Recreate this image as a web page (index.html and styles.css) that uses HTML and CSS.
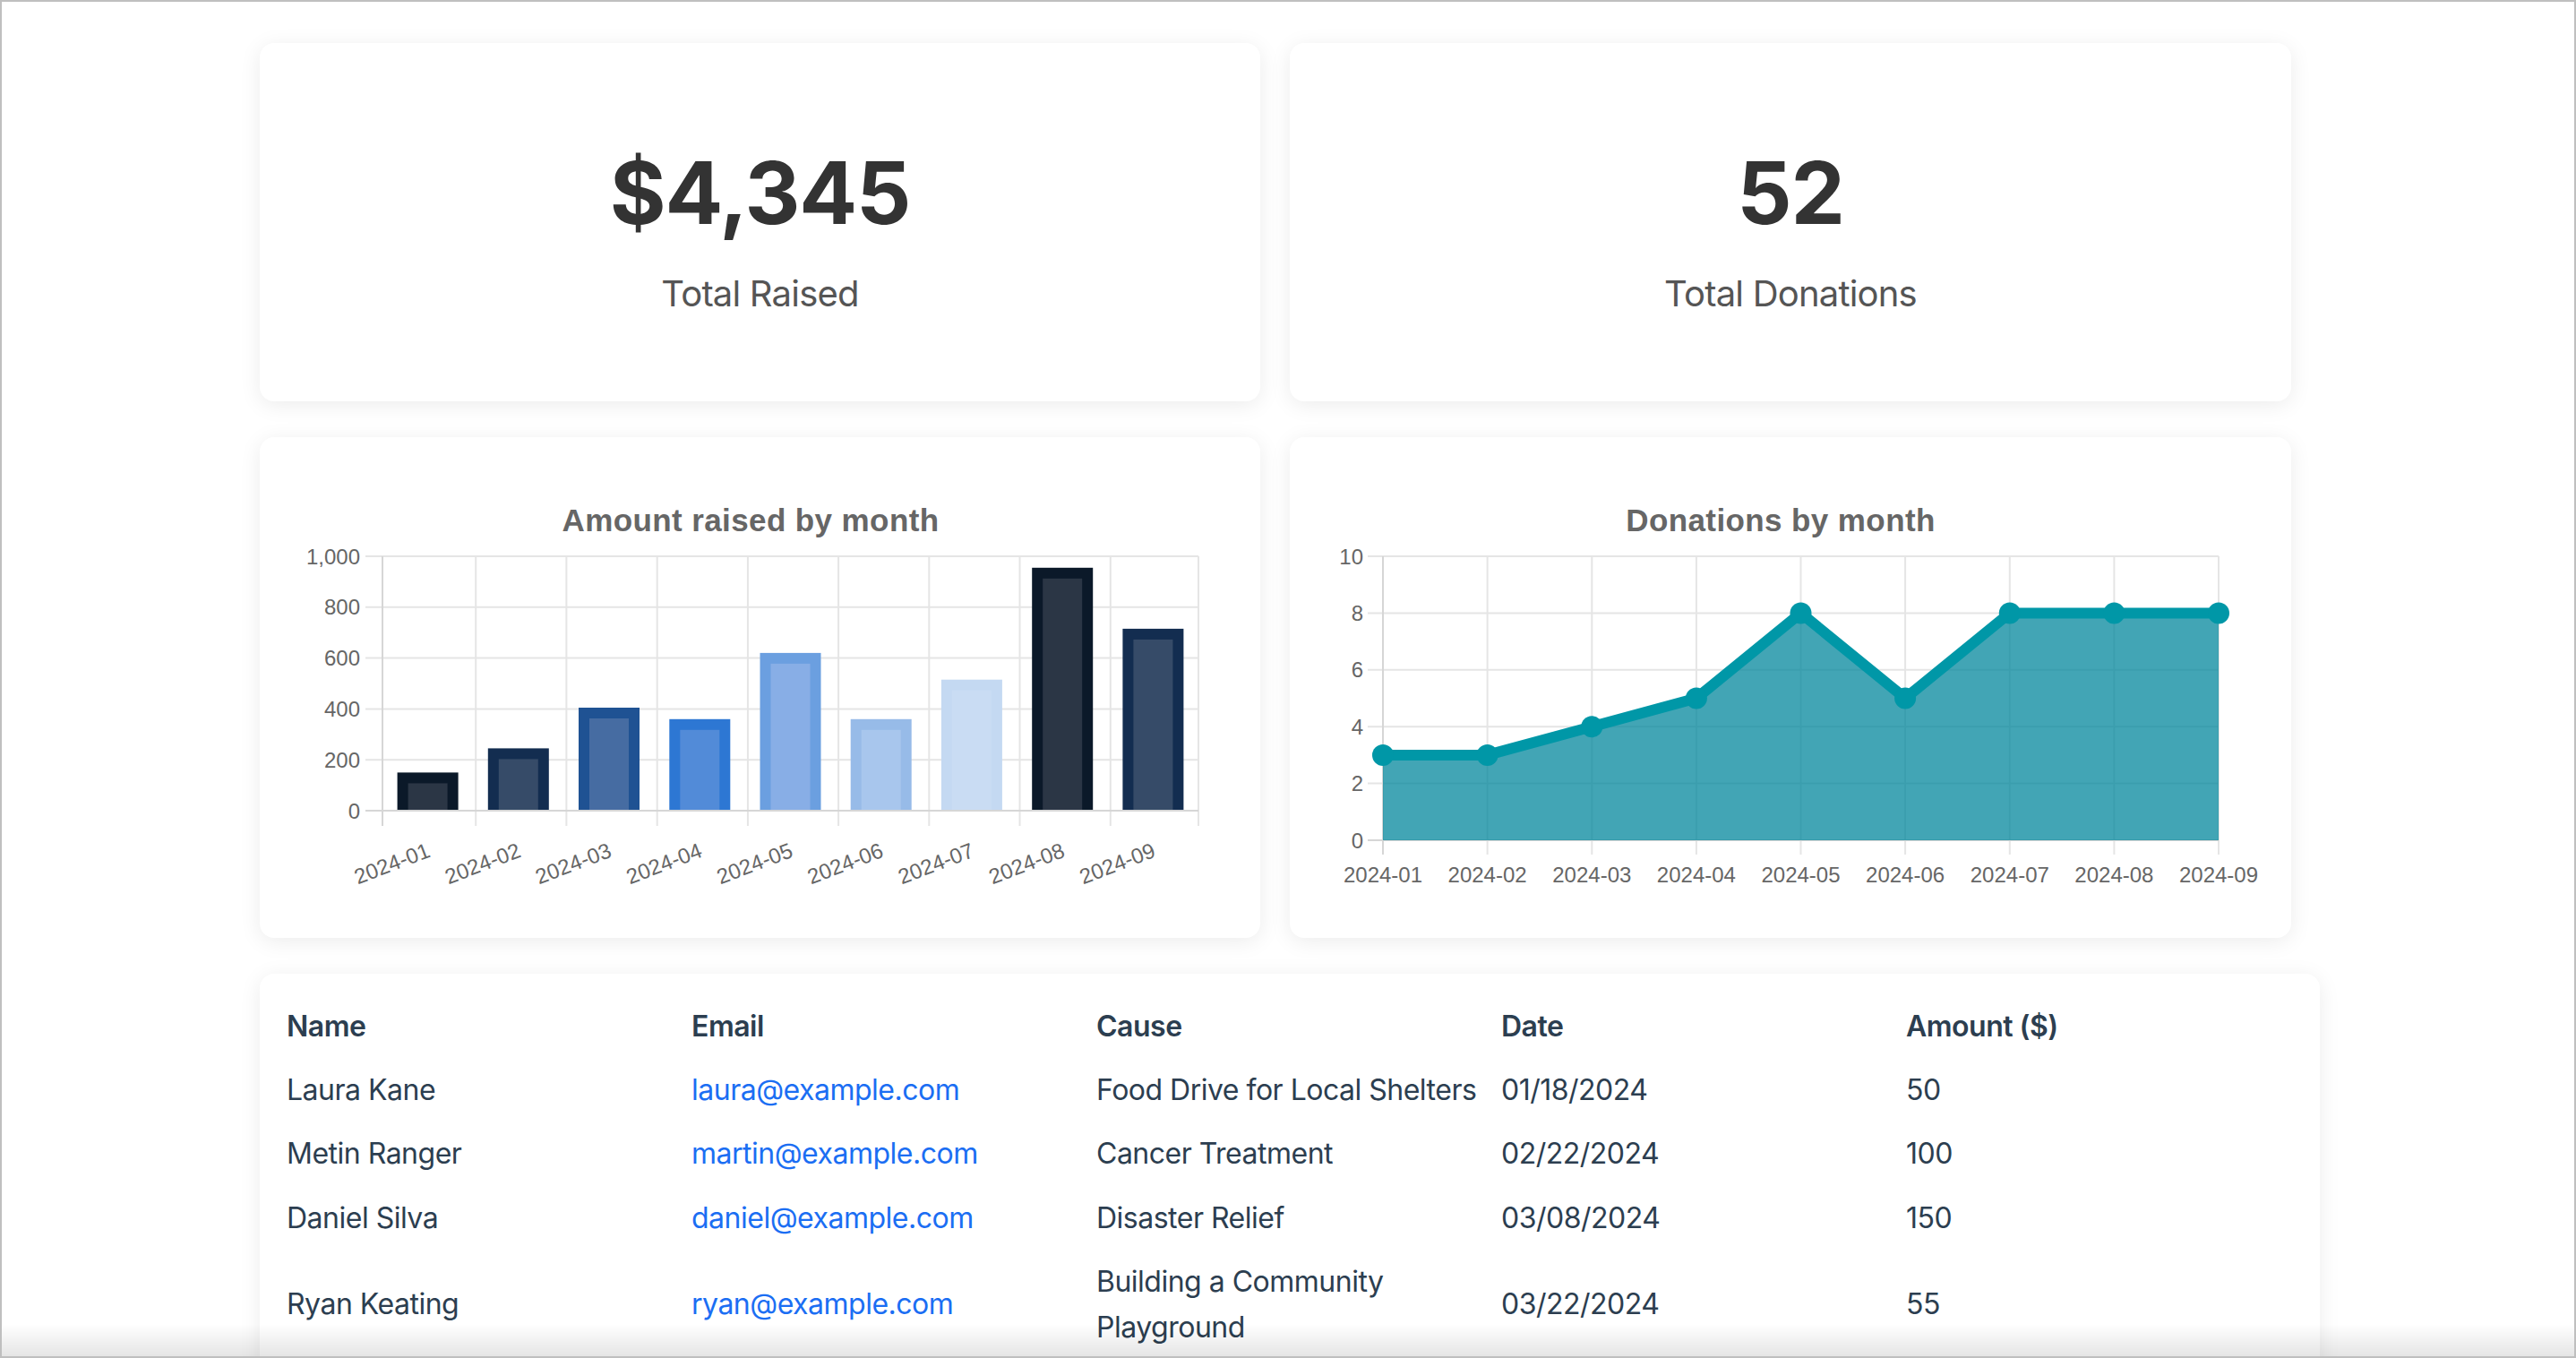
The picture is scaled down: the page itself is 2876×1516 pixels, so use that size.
FILE: index.html
```html
<!DOCTYPE html>
<html lang="en">
<head>
<meta charset="utf-8">
<title>Donations Dashboard</title>
<link rel="stylesheet" href="styles.css">
</head>
<body>
<main class="container">
  <section class="grid">
    <div class="card stat">
      <div class="stat-value">$4,345</div>
      <div class="stat-label">Total Raised</div>
    </div>
    <div class="card stat">
      <div class="stat-value">52</div>
      <div class="stat-label">Total Donations</div>
    </div>

    <div class="card chart">
      <svg class="chart-svg" viewBox="0 0 1117 559" width="1117" height="559">
        <text class="chart-title" x="548" y="105">Amount raised by month</text>
        <g class="gridlines">
          <line x1="118" y1="133" x2="1048" y2="133"/>
          <line x1="118" y1="189.8" x2="1048" y2="189.8"/>
          <line x1="118" y1="246.6" x2="1048" y2="246.6"/>
          <line x1="118" y1="303.4" x2="1048" y2="303.4"/>
          <line x1="118" y1="360.2" x2="1048" y2="360.2"/>
          <line x1="241.2" y1="133" x2="241.2" y2="434"/>
          <line x1="342.4" y1="133" x2="342.4" y2="434"/>
          <line x1="443.7" y1="133" x2="443.7" y2="434"/>
          <line x1="544.9" y1="133" x2="544.9" y2="434"/>
          <line x1="646.1" y1="133" x2="646.1" y2="434"/>
          <line x1="747.3" y1="133" x2="747.3" y2="434"/>
          <line x1="848.5" y1="133" x2="848.5" y2="434"/>
          <line x1="949.8" y1="133" x2="949.8" y2="434"/>
          <line x1="1048" y1="133" x2="1048" y2="434"/>
        </g>
        <g class="bars">
          <rect x="153.6" y="374.4" width="68" height="42.6" fill="#0b1929"/>
          <rect x="165.6" y="386.4" width="44" height="30.6" fill="#2b3645"/>
          <rect x="254.8" y="347.4" width="68" height="69.6" fill="#132d50"/>
          <rect x="266.8" y="359.4" width="44" height="57.6" fill="#364b68"/>
          <rect x="356" y="302" width="68" height="115" fill="#1f5293"/>
          <rect x="368" y="314" width="44" height="103" fill="#466ca2"/>
          <rect x="457.3" y="314.8" width="68" height="102.2" fill="#2d77d3"/>
          <rect x="469.3" y="326.8" width="44" height="90.2" fill="#528bd8"/>
          <rect x="558.5" y="240.9" width="68" height="176.1" fill="#6b9fe0"/>
          <rect x="570.5" y="252.9" width="44" height="164.1" fill="#88aee6"/>
          <rect x="659.7" y="314.8" width="68" height="102.2" fill="#97bbe8"/>
          <rect x="671.7" y="326.8" width="44" height="90.2" fill="#a8c6ed"/>
          <rect x="760.9" y="270.7" width="68" height="146.3" fill="#c4d9f2"/>
          <rect x="772.9" y="282.7" width="44" height="134.3" fill="#c9dcf3"/>
          <rect x="862.2" y="145.8" width="68" height="271.2" fill="#0b1929"/>
          <rect x="874.2" y="157.8" width="44" height="259.2" fill="#2b3645"/>
          <rect x="963.4" y="213.9" width="68" height="203.1" fill="#132d50"/>
          <rect x="975.4" y="225.9" width="44" height="191.1" fill="#364b68"/>
        </g>
        <g class="axes">
          <line x1="118" y1="417" x2="1048" y2="417"/>
          <line x1="137" y1="133" x2="137" y2="434"/>
        </g>
        <g class="ticks ticks-y">
          <text x="112" y="141.5">1,000</text>
          <text x="112" y="198.3">800</text>
          <text x="112" y="255.1">600</text>
          <text x="112" y="311.9">400</text>
          <text x="112" y="368.7">200</text>
          <text x="112" y="425.5">0</text>
        </g>
        <g class="ticks ticks-x-rot">
          <text transform="translate(185.6 452) rotate(-21)" y="17">2024-01</text>
          <text transform="translate(286.8 452) rotate(-21)" y="17">2024-02</text>
          <text transform="translate(388 452) rotate(-21)" y="17">2024-03</text>
          <text transform="translate(489.3 452) rotate(-21)" y="17">2024-04</text>
          <text transform="translate(590.5 452) rotate(-21)" y="17">2024-05</text>
          <text transform="translate(691.7 452) rotate(-21)" y="17">2024-06</text>
          <text transform="translate(792.9 452) rotate(-21)" y="17">2024-07</text>
          <text transform="translate(894.2 452) rotate(-21)" y="17">2024-08</text>
          <text transform="translate(995.4 452) rotate(-21)" y="17">2024-09</text>
        </g>
      </svg>
    </div>

    <div class="card chart">
      <svg class="chart-svg" viewBox="0 0 1118 559" width="1118" height="559">
        <text class="chart-title" x="548" y="105">Donations by month</text>
        <g class="gridlines">
          <line x1="87" y1="133" x2="1037" y2="133"/>
          <line x1="87" y1="196.4" x2="1037" y2="196.4"/>
          <line x1="87" y1="259.8" x2="1037" y2="259.8"/>
          <line x1="87" y1="323.2" x2="1037" y2="323.2"/>
          <line x1="87" y1="386.6" x2="1037" y2="386.6"/>
          <line x1="220.6" y1="133" x2="220.6" y2="466"/>
          <line x1="337.3" y1="133" x2="337.3" y2="466"/>
          <line x1="453.9" y1="133" x2="453.9" y2="466"/>
          <line x1="570.5" y1="133" x2="570.5" y2="466"/>
          <line x1="687.1" y1="133" x2="687.1" y2="466"/>
          <line x1="803.8" y1="133" x2="803.8" y2="466"/>
          <line x1="920.4" y1="133" x2="920.4" y2="466"/>
          <line x1="1037" y1="133" x2="1037" y2="466"/>
        </g>
        <g class="axes">
          <line x1="87" y1="450" x2="1037" y2="450"/>
          <line x1="104" y1="133" x2="104" y2="466"/>
        </g>
        <path class="area" d="M104,450 L104,354.9 L220.6,354.9 L337.3,323.2 L453.9,291.5 L570.5,196.4 L687.1,291.5 L803.8,196.4 L920.4,196.4 L1037,196.4 L1037,450 Z"/>
        <polyline class="line" points="104,354.9 220.6,354.9 337.3,323.2 453.9,291.5 570.5,196.4 687.1,291.5 803.8,196.4 920.4,196.4 1037,196.4"/>
        <g class="points">
          <circle cx="104" cy="354.9" r="12"/>
          <circle cx="220.6" cy="354.9" r="12"/>
          <circle cx="337.3" cy="323.2" r="12"/>
          <circle cx="453.9" cy="291.5" r="12"/>
          <circle cx="570.5" cy="196.4" r="12"/>
          <circle cx="687.1" cy="291.5" r="12"/>
          <circle cx="803.8" cy="196.4" r="12"/>
          <circle cx="920.4" cy="196.4" r="12"/>
          <circle cx="1037" cy="196.4" r="12"/>
        </g>
        <g class="ticks ticks-y">
          <text x="82" y="141.5">10</text>
          <text x="82" y="204.9">8</text>
          <text x="82" y="268.3">6</text>
          <text x="82" y="331.7">4</text>
          <text x="82" y="395.1">2</text>
          <text x="82" y="458.5">0</text>
        </g>
        <g class="ticks ticks-x">
          <text x="104" y="497">2024-01</text>
          <text x="220.6" y="497">2024-02</text>
          <text x="337.3" y="497">2024-03</text>
          <text x="453.9" y="497">2024-04</text>
          <text x="570.5" y="497">2024-05</text>
          <text x="687.1" y="497">2024-06</text>
          <text x="803.8" y="497">2024-07</text>
          <text x="920.4" y="497">2024-08</text>
          <text x="1037" y="497">2024-09</text>
        </g>
      </svg>
    </div>
  </section>

  <section class="card table-card">
    <table class="donations">
      <thead>
        <tr><th>Name</th><th>Email</th><th>Cause</th><th>Date</th><th>Amount ($)</th></tr>
      </thead>
      <tbody>
        <tr><td>Laura Kane</td><td><a href="#">laura@example.com</a></td><td>Food Drive for Local Shelters</td><td>01/18/2024</td><td>50</td></tr>
        <tr><td>Metin Ranger</td><td><a href="#">martin@example.com</a></td><td>Cancer Treatment</td><td>02/22/2024</td><td>100</td></tr>
        <tr><td>Daniel Silva</td><td><a href="#">daniel@example.com</a></td><td>Disaster Relief</td><td>03/08/2024</td><td>150</td></tr>
        <tr><td>Ryan Keating</td><td><a href="#">ryan@example.com</a></td><td>Building a Community Playground</td><td>03/22/2024</td><td>55</td></tr>
      </tbody>
    </table>
  </section>
</main>
<div class="bottom-fade"></div>
</body>
</html>
```

FILE: styles.css
```css
html, body {
  margin: 0;
  padding: 0;
}

body {
  box-sizing: border-box;
  height: 100vh;
  overflow: hidden;
  background: #ffffff;
  border: 2px solid #bfbfbf;
  font-family: Inter, "Noto Sans", "Liberation Sans", sans-serif;
  color: #333333;
}

.container {
  width: 2300px;
  margin-left: calc(50% - 1148px);
  padding-top: 46px;
}

.grid {
  display: grid;
  grid-template-columns: 1117px 1118px;
  column-gap: 33px;
  row-gap: 40px;
}

.card {
  background: #ffffff;
  border-radius: 16px;
  box-shadow: 0 4px 24px rgba(0, 0, 0, 0.08);
}

.stat {
  box-sizing: border-box;
  height: 400px;
  padding-top: 119px;
  text-align: center;
}

.stat-value {
  font-size: 96px;
  line-height: 1;
  font-weight: 700;
  color: #333333;
  letter-spacing: -1.2px;
}

.stat-label {
  margin-top: 45px;
  font-size: 40px;
  line-height: 1;
  color: #555555;
  letter-spacing: -0.8px;
}

.chart {
  height: 559px;
}

.chart-svg {
  display: block;
}

.chart-title {
  font-family: "Liberation Sans", Arial, sans-serif;
  font-size: 35px;
  font-weight: 700;
  letter-spacing: 0.4px;
  fill: #666666;
  text-anchor: middle;
}

.gridlines line {
  stroke: #e5e5e5;
  stroke-width: 2;
}

.axes line {
  stroke: #d6d6d6;
  stroke-width: 2;
}

.ticks text {
  font-family: "Liberation Sans", Arial, sans-serif;
  font-size: 24px;
  fill: #666666;
}

.ticks-y text,
.ticks-x-rot text {
  text-anchor: end;
}

.ticks-x text {
  text-anchor: middle;
}

.area {
  fill: rgba(0, 134, 155, 0.74);
}

.line {
  fill: none;
  stroke: #0097a7;
  stroke-width: 12;
  stroke-linejoin: round;
}

.points circle {
  fill: #0097a7;
}

.table-card {
  margin-top: 40px;
  padding: 23px 20px 20px;
}

.donations {
  width: 100%;
  border-collapse: collapse;
  table-layout: fixed;
  font-size: 32px;
  line-height: 1.6;
  color: #2c3e50;
  letter-spacing: -0.5px;
}

.donations th,
.donations td {
  padding: 10px;
  text-align: left;
  vertical-align: middle;
}

.donations th {
  font-weight: 600;
  color: #2c3e50;
}

.donations a {
  color: #1b6ef3;
  text-decoration: none;
}

.bottom-fade {
  position: fixed;
  left: 2px;
  right: 2px;
  bottom: 2px;
  height: 36px;
  background: linear-gradient(to bottom, rgba(0, 0, 0, 0), rgba(0, 0, 0, 0.1));
  pointer-events: none;
}
```
